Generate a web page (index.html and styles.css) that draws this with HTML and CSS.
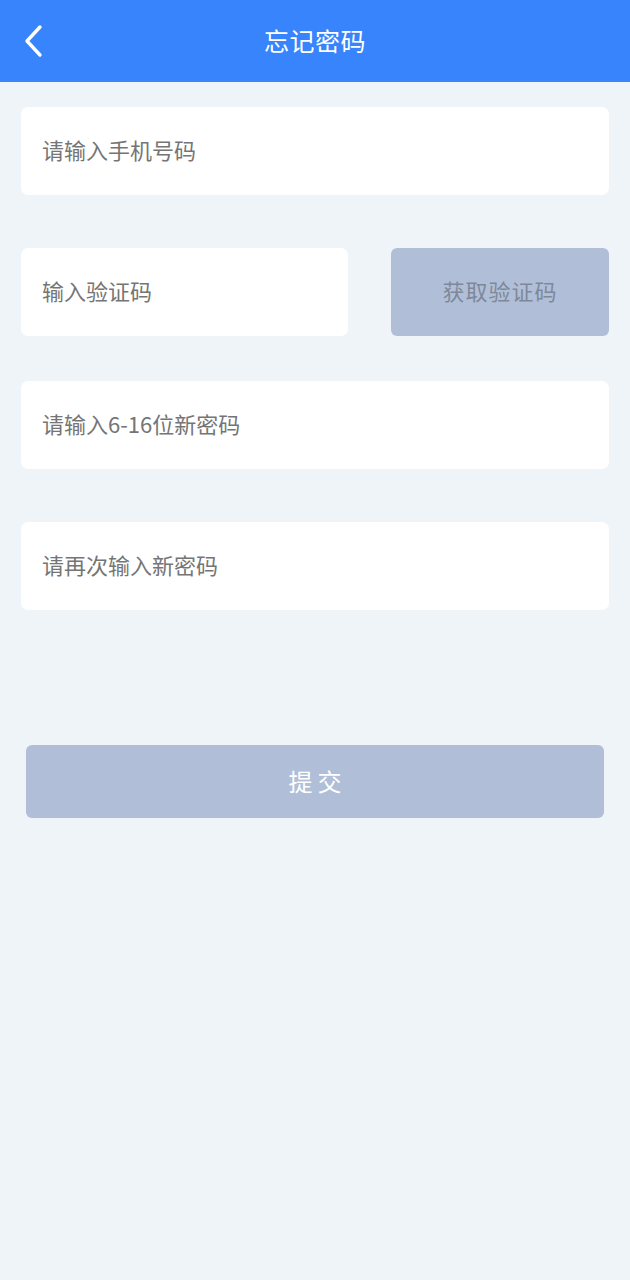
FILE: index.html
```html
<!DOCTYPE html>
<html lang="zh">
<head>
<meta charset="utf-8">
<title>忘记密码</title>
<link rel="stylesheet" href="styles.css">
</head>
<body>
<header class="topbar">
  <span class="back">
    <svg width="22" height="34" viewBox="0 0 22 34"><path d="M18 3 L5 17 L18 31" fill="none" stroke="#fff" stroke-width="3.4" stroke-linecap="round" stroke-linejoin="round"/></svg>
  </span>
  <h1 class="title">忘记密码</h1>
</header>
<main class="form">
  <div class="field row-1"><span class="ph">请输入手机号码</span></div>
  <div class="code-row">
    <div class="field code"><span class="ph">输入验证码</span></div>
    <div class="get-code">获取验证码</div>
  </div>
  <div class="field row-3"><span class="ph">请输入6-16位新密码</span></div>
  <div class="field row-4"><span class="ph">请再次输入新密码</span></div>
  <div class="submit">提交</div>
</main>
</body>
</html>
```
FILE: styles.css
```css
* { box-sizing: border-box; }
html, body { margin: 0; padding: 0; }
body {
  background: #eff4f8;
  font-family: "Noto Sans CJK SC", "Noto Sans", sans-serif;
  width: 630px;
  min-height: 1280px;
}
.topbar {
  height: 82px;
  background: #3784fc;
  display: flex;
  align-items: center;
  justify-content: center;
  position: relative;
}
.back {
  position: absolute;
  left: 22px;
  top: 24px;
  display: flex;
}
.title {
  margin: 0;
  color: #fff;
  font-size: 25px;
  font-weight: 400;
  letter-spacing: 0.5px;
  padding-bottom: 2px;
}
.form {
  padding: 0 21px;
  display: flex;
  flex-direction: column;
}
.field {
  height: 88px;
  background: #fff;
  border-radius: 7px;
  display: flex;
  align-items: center;
  padding-left: 21px;
  padding-bottom: 4px;
}
.ph {
  color: #757575;
  font-size: 22px;
}
.row-1 { margin-top: 25px; }
.code-row {
  margin-top: 53px;
  display: flex;
  justify-content: space-between;
}
.code { width: 327px; }
.get-code {
  width: 218px;
  height: 88px;
  background: #b0bfd7;
  border-radius: 6px;
  display: flex;
  align-items: center;
  justify-content: center;
  color: #7f889a;
  font-size: 22px;
  letter-spacing: 1px;
  padding-bottom: 4px;
}
.row-3 { margin-top: 45px; }
.row-4 { margin-top: 53px; }
.submit {
  margin: 135px 5px 0;
  height: 73px;
  background: #b0bfd7;
  border-radius: 6px;
  display: flex;
  align-items: center;
  justify-content: center;
  color: #fff;
  font-size: 24px;
  letter-spacing: 5px;
  padding-left: 5px;
  padding-bottom: 2px;
}
```
